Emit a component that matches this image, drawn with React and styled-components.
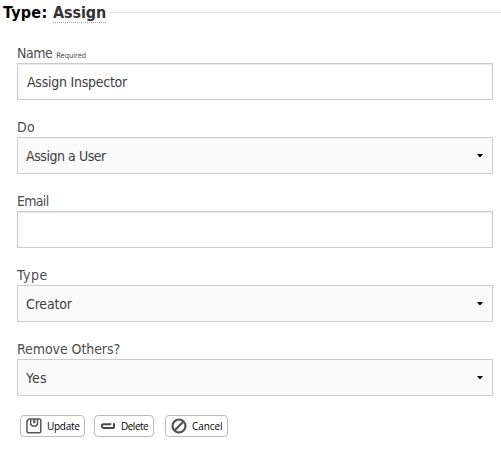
import React from "react";
import styled, { createGlobalStyle } from "styled-components";

const GlobalStyle = createGlobalStyle`
  body { margin: 0; background: #fff; overflow: hidden; }
  * { box-sizing: border-box; }
`;

const Page = styled.main`
  width: 501px;
  height: 458px;
  overflow: hidden;
  font-family: Tahoma, "DejaVu Sans Condensed", "DejaVu Sans", sans-serif;
  font-stretch: condensed;
`;

const Heading = styled.h1`
  display: flex;
  align-items: flex-start;
  height: 44px;
  margin: 0;
  padding: 4px 0 0 3px;
  font-size: 16px;
  line-height: 18px;
  font-weight: 700;
  color: #000;
  white-space: nowrap;
`;

const HeadingName = styled.span`
  width: 50px;
  letter-spacing: 0.25px;
`;

const EditableType = styled.span`
  width: 53px;
  height: 19px;
  color: #333;
  letter-spacing: -0.1px;
  border-bottom: 1px dotted #aaa;
`;

const Rule = styled.span`
  flex: 1;
  margin: 8px 0 0 3px;
  border-top: 1px solid #ddd;
`;

const Form = styled.form`
  width: 476px;
  margin-left: 17px;
`;

const Field = styled.div`
  height: 74px;
`;

const Label = styled.label`
  display: flex;
  align-items: baseline;
  height: 19px;
  line-height: 18px;
  font-size: 14px;
  color: #4d4d4d;
  white-space: nowrap;
  letter-spacing: ${(p) => p.$tracking || "0"};
`;

const Required = styled.small`
  margin-left: 4px;
  font-size: 7.5px;
  letter-spacing: 0;
`;

const Control = styled.div`
  display: flex;
  align-items: center;
  justify-content: space-between;
  height: 37px;
  padding: 0 9px 0 ${(p) => (p.$select ? "8px" : "9px")};
  border: 1px solid #ccc;
  background: ${(p) => (p.$select ? "#fafafa" : "#fff")};
  box-shadow: ${(p) => (p.$select ? "none" : "inset 0 1px 2px rgba(0,0,0,.1)")};
  color: #404040;
  font-size: 14px;
  line-height: 18px;
  white-space: nowrap;
  letter-spacing: ${(p) => p.$tracking || "0"};
`;

const Actions = styled.div`
  display: flex;
  margin-left: 3px;
`;

const Button = styled.button`
  display: flex;
  align-items: center;
  width: ${(p) => p.$width};
  height: 22px;
  margin: 1px ${(p) => p.$gap || "0"} 0 0;
  padding: 0 0 0 5px;
  border: 1px solid #bbb;
  border-radius: 4px;
  background: #fff;
  color: #000;
  font: 10px/14px "Open Sans", "Noto Sans", sans-serif;
  letter-spacing: ${(p) => p.$tracking || "0"};
  white-space: nowrap;

  svg { flex: none; margin-right: 5px; }
`;

const Caret = () => (
  <svg width="6" height="3" viewBox="0 0 6 3" aria-hidden="true">
    <path d="M0 0h6L3.6 3H2.4z" fill="#000" />
  </svg>
);

const SaveIcon = () => (
  <svg width="16" height="16" viewBox="0 0 16 16" fill="none" stroke="#555" strokeWidth="1.5" aria-hidden="true">
    <path d="M3 .9h10.6q1.2 0 1.2 1.2v11.3q0 1.4-1.4 1.4H2.4Q1 14.8 1 13.4V2.9z" />
    <path d="M4.7 1.2v5.2L6.5 8h3.3l1.7-1.6V1.2" />
    <path d="M8.2 1.5v3.7" strokeWidth="2.2" />
  </svg>
);

const DeleteIcon = () => (
  <svg width="16" height="16" viewBox="0 0 16 16" fill="none" stroke="#484848" strokeWidth="2" aria-hidden="true">
    <path d="M11.2 6.2H3.5Q1.9 6.2 1.9 8t1.6 2.1h9Q14 10.1 14 8.4V5.2" />
  </svg>
);

const CancelIcon = () => (
  <svg width="16" height="16" viewBox="0 0 16 16" fill="none" stroke="#505050" strokeWidth="2.1" aria-hidden="true">
    <circle cx="8" cy="8" r="6.5" />
    <path d="M3.5 12.5l9-9" />
  </svg>
);

const fields = [
  { label: "Name", labelTracking: "-0.5px", required: true, value: "Assign Inspector", tracking: "-0.25px" },
  { label: "Do", labelTracking: "0.3px", value: "Assign a User", tracking: "-0.45px", select: true },
  { label: "Email", labelTracking: "-0.7px", value: "" },
  { label: "Type", labelTracking: "0.5px", value: "Creator", tracking: "-0.15px", select: true },
  { label: "Remove Others?", labelTracking: "-0.07px", value: "Yes", tracking: "0.25px", select: true },
];

export default function App() {
  return (
    <Page>
      <GlobalStyle />
      <Heading>
        <HeadingName>Type:</HeadingName>
        <EditableType>Assign</EditableType>
        <Rule />
      </Heading>
      <Form>
        {fields.map((f) => (
          <Field key={f.label}>
            <Label $tracking={f.labelTracking}>
              {f.label}
              {f.required && <Required>Required</Required>}
            </Label>
            <Control $select={f.select} $tracking={f.tracking}>
              <span>{f.value}</span>
              {f.select && <Caret />}
            </Control>
          </Field>
        ))}
        <Actions>
          <Button type="button" $width="65px" $gap="9px" $tracking="-0.3px"><SaveIcon />Update</Button>
          <Button type="button" $width="60px" $gap="11px" $tracking="-0.5px"><DeleteIcon />Delete</Button>
          <Button type="button" $width="63px" $tracking="-0.1px"><CancelIcon />Cancel</Button>
        </Actions>
      </Form>
    </Page>
  );
}
